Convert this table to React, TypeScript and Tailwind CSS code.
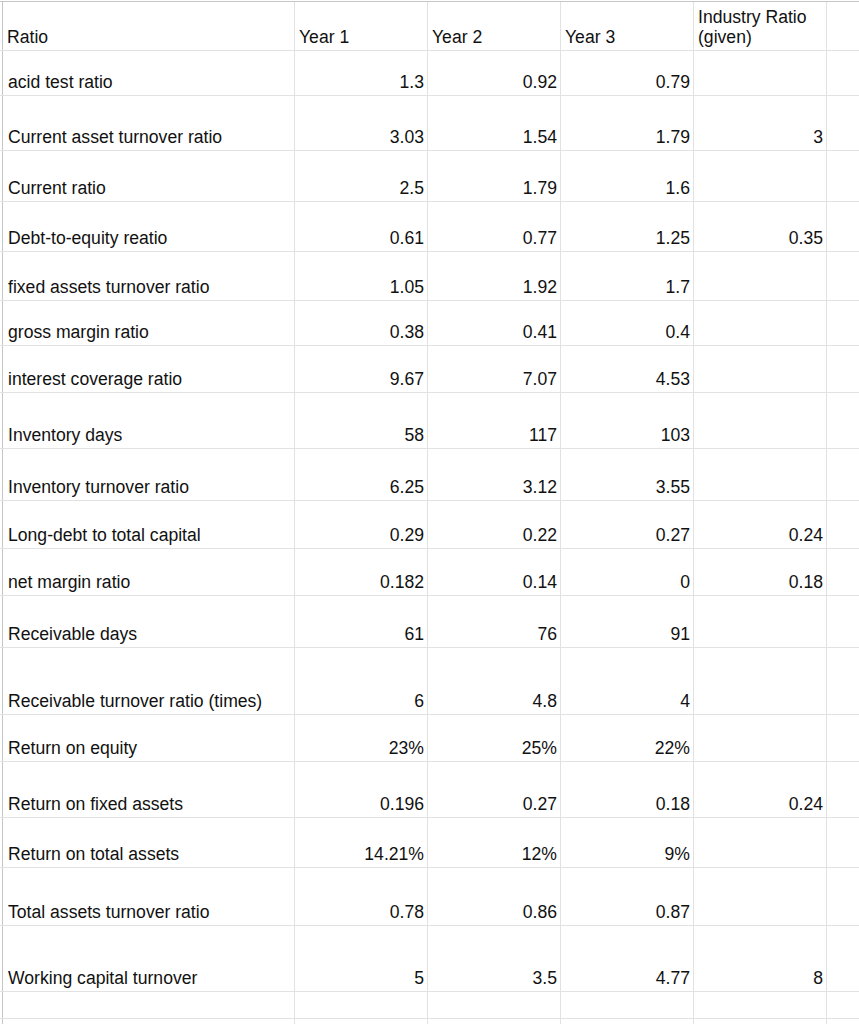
import React from "react";

type Row = { h: number; cells: string[] };

const rows: Row[] = [
  { h: 45, cells: ["acid test ratio", "1.3", "0.92", "0.79", ""] },
  { h: 55, cells: ["Current asset turnover ratio", "3.03", "1.54", "1.79", "3"] },
  { h: 51, cells: ["Current ratio", "2.5", "1.79", "1.6", ""] },
  { h: 50, cells: ["Debt-to-equity reatio", "0.61", "0.77", "1.25", "0.35"] },
  { h: 49, cells: ["fixed assets turnover ratio", "1.05", "1.92", "1.7", ""] },
  { h: 45, cells: ["gross margin ratio", "0.38", "0.41", "0.4", ""] },
  { h: 47, cells: ["interest coverage ratio", "9.67", "7.07", "4.53", ""] },
  { h: 56, cells: ["Inventory days", "58", "117", "103", ""] },
  { h: 52, cells: ["Inventory turnover ratio", "6.25", "3.12", "3.55", ""] },
  { h: 48, cells: ["Long-debt to total capital", "0.29", "0.22", "0.27", "0.24"] },
  { h: 47, cells: ["net margin ratio", "0.182", "0.14", "0", "0.18"] },
  { h: 52, cells: ["Receivable days", "61", "76", "91", ""] },
  { h: 67, cells: ["Receivable turnover ratio (times)", "6", "4.8", "4", ""] },
  { h: 47, cells: ["Return on equity", "23%", "25%", "22%", ""] },
  { h: 56, cells: ["Return on fixed assets", "0.196", "0.27", "0.18", "0.24"] },
  { h: 50, cells: ["Return on total assets", "14.21%", "12%", "9%", ""] },
  { h: 58, cells: ["Total assets turnover ratio", "0.78", "0.86", "0.87", ""] },
  { h: 66, cells: ["Working capital turnover", "5", "3.5", "4.77", "8"] },
  { h: 27, cells: ["", "", "", "", ""] },
  { h: 40, cells: ["", "", "", "", ""] },
];

function Stub() {
  return <div className="w-[3px] shrink-0 border-r border-[#c6c6c6]" />;
}

export default function App() {
  return (
    <div
      className="w-[859px] h-[1024px] overflow-hidden bg-white text-[#111] text-[17.6px] leading-[20px]"
      style={{ fontFamily: '"Liberation Sans", Arial, sans-serif' }}
    >
      <div className="mt-[1px] border-t border-[#c6c6c6] w-[1000px]">
        {/* Header */}
        <div className="flex h-[49px] border-b border-[#e2e2e2]">
          <Stub />
          <div className="w-[292px] shrink-0 border-r border-[#e2e2e2] flex items-end pl-[4px] pb-[3px]">
            Ratio
          </div>
          <div className="w-[133px] shrink-0 border-r border-[#e2e2e2] flex items-end pl-[4px] pb-[3px]">
            Year 1
          </div>
          <div className="w-[133px] shrink-0 border-r border-[#e2e2e2] flex items-end pl-[4px] pb-[3px]">
            Year 2
          </div>
          <div className="w-[133px] shrink-0 border-r border-[#e2e2e2] flex items-end pl-[4px] pb-[3px]">
            Year 3
          </div>
          <div className="w-[133px] shrink-0 border-r border-[#e2e2e2] flex items-end pl-[4px] pb-[3px]">
            <span>
              Industry Ratio
              <br />
              (given)
            </span>
          </div>
          <div className="w-[133px] shrink-0 border-r border-[#e2e2e2]" />
        </div>
        {rows.map((r, i) => (
          <div
            key={i}
            className="flex border-b border-[#e2e2e2]"
            style={{ height: r.h }}
          >
            <Stub />
            <div className="w-[292px] shrink-0 border-r border-[#e2e2e2] flex items-end pl-[5px] pb-[3px] whitespace-nowrap">
              {r.cells[0]}
            </div>
            {r.cells.slice(1).map((c, j) => (
              <div
                key={j}
                className="w-[133px] shrink-0 border-r border-[#e2e2e2] flex items-end justify-end pr-[3px] pb-[3px]"
              >
                {c}
              </div>
            ))}
            <div className="w-[133px] shrink-0 border-r border-[#e2e2e2]" />
          </div>
        ))}
      </div>
    </div>
  );
}
